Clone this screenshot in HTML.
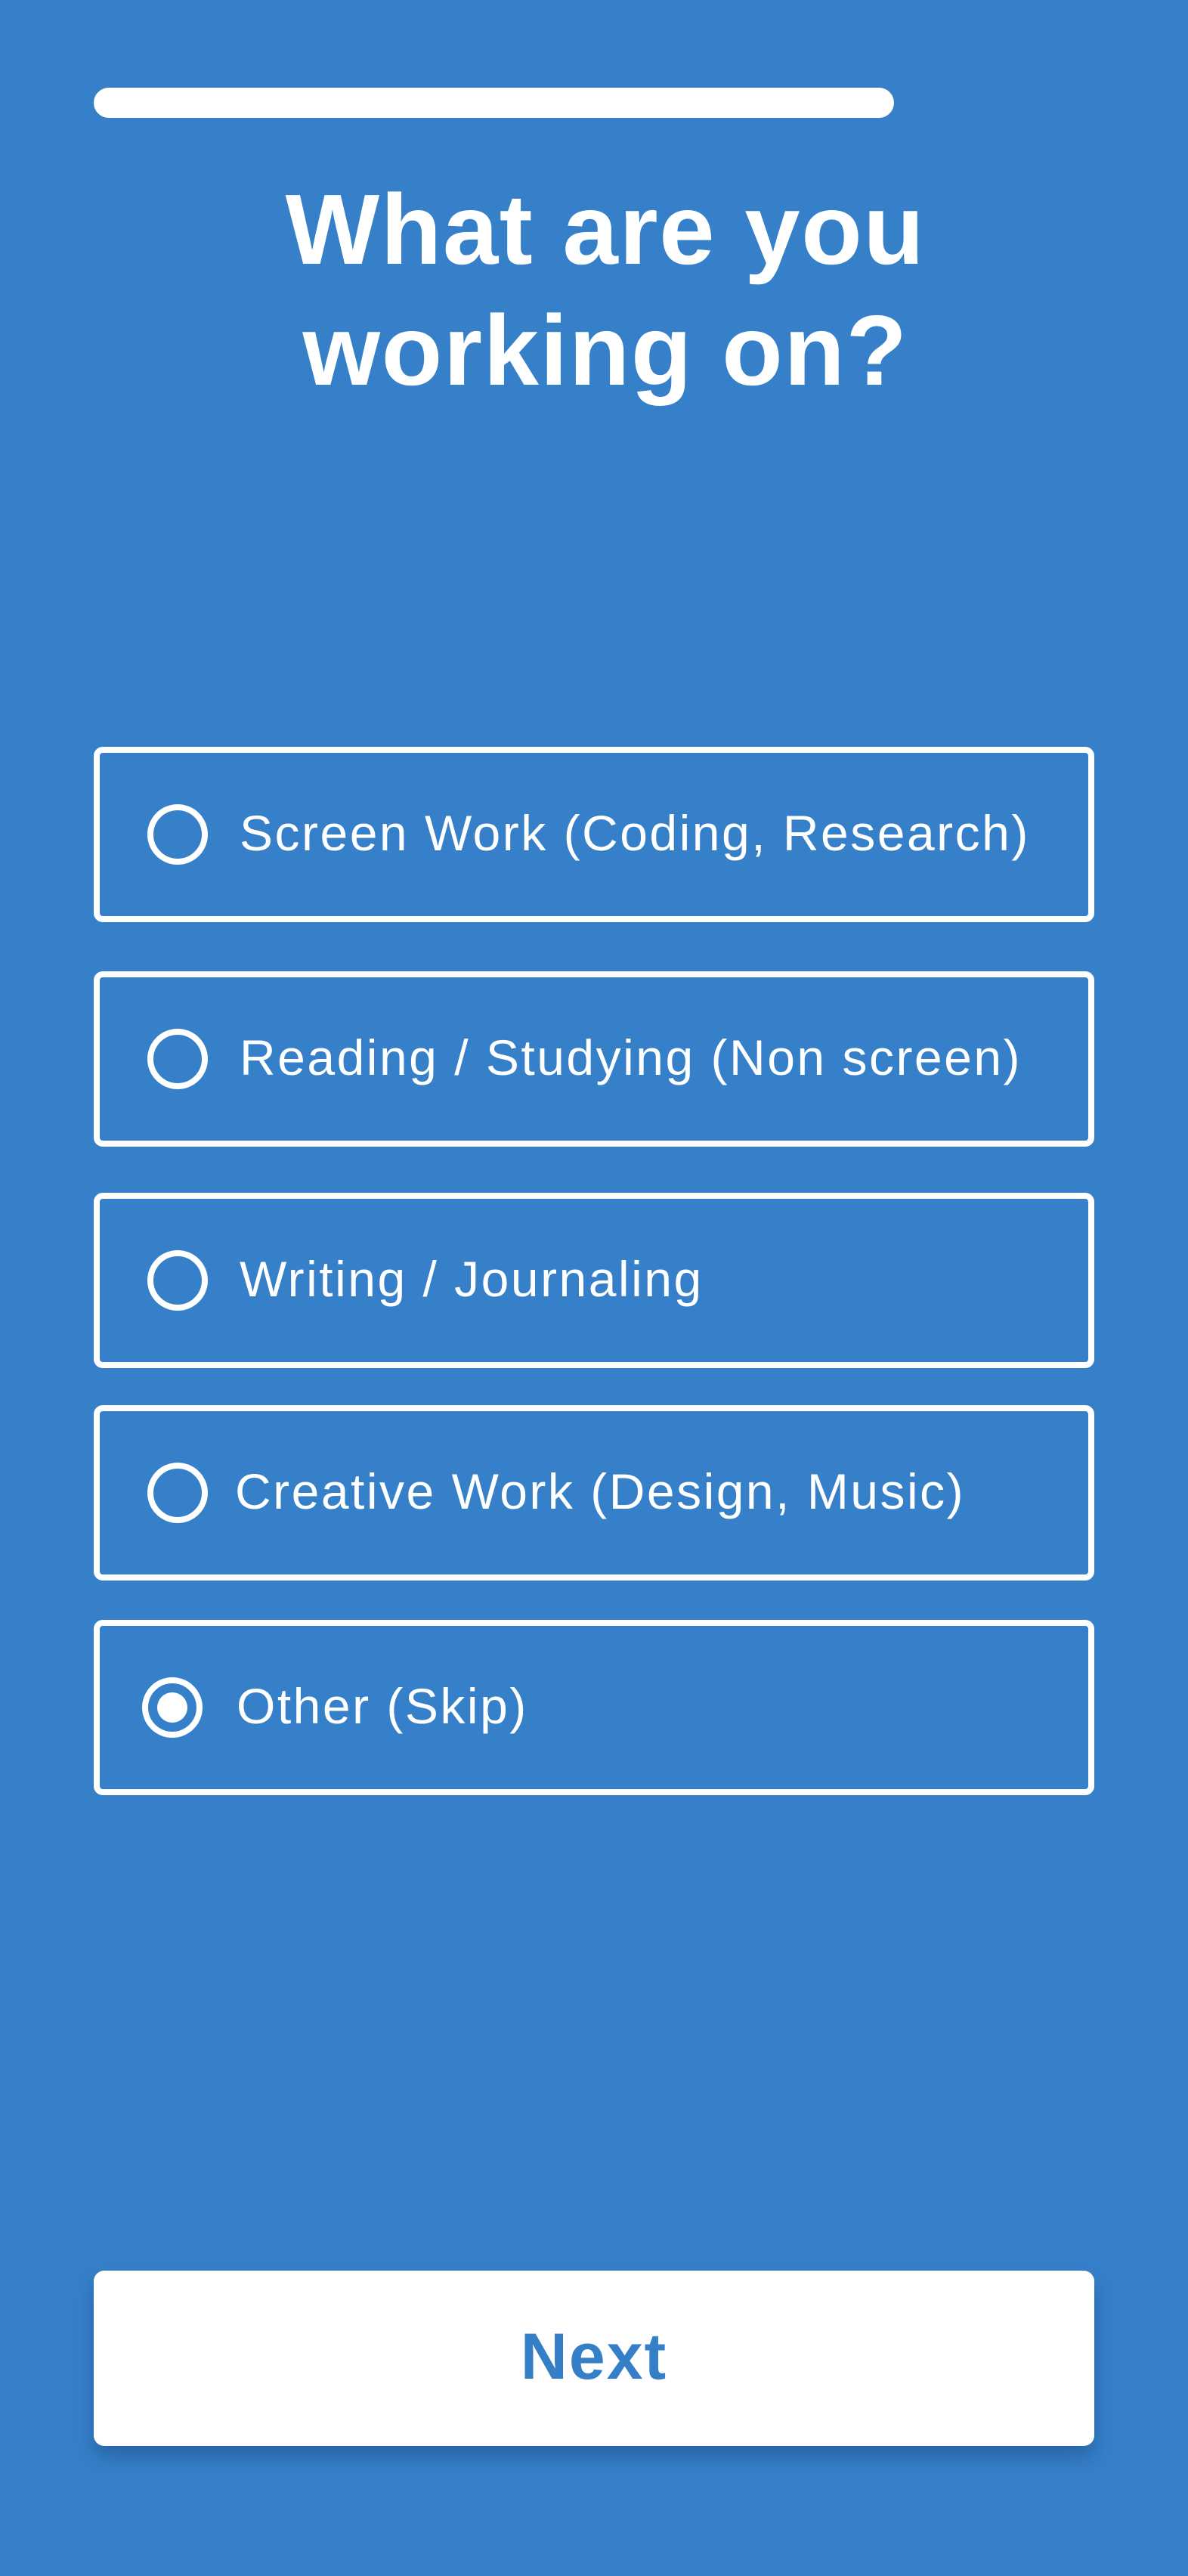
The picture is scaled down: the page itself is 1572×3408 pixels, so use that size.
<!DOCTYPE html>
<html><head><meta charset="utf-8"><style>
html,body{margin:0;padding:0}
body{width:1572px;height:3408px;background:#3580C9;position:relative;overflow:hidden;font-family:"Liberation Sans",sans-serif;color:#fff}
.bar{position:absolute;left:124px;top:116px;width:1059px;height:40px;border-radius:20px;background:#fff}
.title{position:absolute;left:15px;width:1572px;top:224px;text-align:center;font-weight:bold;font-size:132px;line-height:160px;letter-spacing:1.5px}
.box{position:absolute;left:124px;width:1308px;height:216px;border:8px solid #fff;border-radius:12px}
.rad{position:absolute;width:64px;height:64px;border:8px solid #fff;border-radius:50%}
.dot{position:absolute;left:12px;top:12px;width:40px;height:40px;border-radius:50%;background:#fff}
.txt{position:absolute;font-size:66px;line-height:66px;white-space:nowrap;letter-spacing:2.5px}
.btn{position:absolute;left:124px;top:3004px;width:1324px;height:232px;background:#fff;border-radius:14px;box-shadow:0 14px 24px rgba(20,50,100,0.35);text-align:center;font-weight:bold;font-size:86px;line-height:228px;color:#347FC8;letter-spacing:2px}
</style></head><body>
<div class="bar"></div>
<div class="title">What are you<br>working on?</div>

<div class="box" style="top:988px"><div class="rad" style="left:63px;top:68px"></div><div class="txt" style="left:185px;top:73px">Screen Work (Coding, Research)</div></div>
<div class="box" style="top:1285px"><div class="rad" style="left:63px;top:68px"></div><div class="txt" style="left:185px;top:73px">Reading / Studying (Non screen)</div></div>
<div class="box" style="top:1578px"><div class="rad" style="left:63px;top:68px"></div><div class="txt" style="left:185px;top:73px">Writing / Journaling</div></div>
<div class="box" style="top:1859px"><div class="rad" style="left:63px;top:68px"></div><div class="txt" style="left:179px;top:73px">Creative Work (Design, Music)</div></div>
<div class="box" style="top:2143px"><div class="rad" style="left:56px;top:68px"><div class="dot"></div></div><div class="txt" style="left:181px;top:73px">Other (Skip)</div></div>

<div class="btn">Next</div>
</body></html>
